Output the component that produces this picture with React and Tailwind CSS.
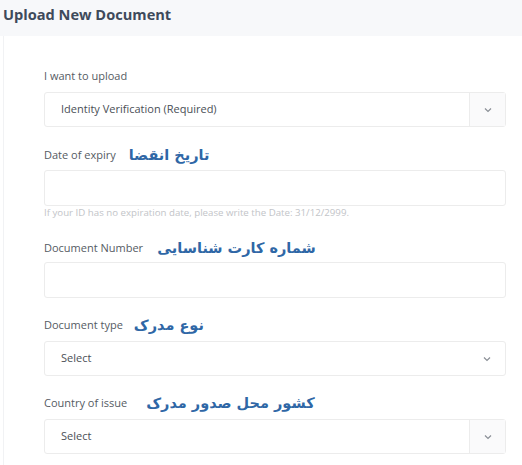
function Chevron() {
  return (
    <svg width="10" height="10" viewBox="0 0 10 10" fill="none">
      <path d="M2 3.5 L5 6.5 L8 3.5" stroke="#8a8f96" strokeWidth="1.2" />
    </svg>
  );
}

function Label({ text, fa, gap = "gap-[13px]" }) {
  return (
    <div className={`flex items-center h-[20px] ${gap}`}>
      <span className="text-[11px] text-[#555b63]">{text}</span>
      {fa && (
        <span
          dir="rtl"
          className="text-[14.5px] font-bold text-[#2f67a6] leading-none"
          style={{ fontFamily: '"DejaVu Sans", sans-serif' }}
        >
          {fa}
        </span>
      )}
    </div>
  );
}

function SelectBox({ value, segment }) {
  return (
    <div className="flex h-[35px] border border-[#ececec] rounded-[3px] bg-white">
      <div className="flex-1 flex items-center pl-[16px] text-[11px] text-[#4a4f56]">
        {value}
      </div>
      <div
        className={
          segment
            ? "w-[36px] flex items-center justify-center bg-[#fafafb] border-l border-[#ececec]"
            : "w-[36px] flex items-center justify-center"
        }
      >
        <Chevron />
      </div>
    </div>
  );
}

function Input() {
  return <div className="h-[36px] border border-[#ececec] rounded-[3px] bg-white" />;
}

export default function App() {
  return (
    <div
      className="w-[522px] h-[465px] bg-white overflow-hidden"
      style={{ fontFamily: '"Open Sans", sans-serif' }}
    >
      <div className="h-[36px] bg-[#f7f8fa] flex items-center pl-[3px] pb-[6px]">
        <h1 className="text-[14.6px] font-bold text-[#3e4a5b]">Upload New Document</h1>
      </div>
      <div className="ml-[3px] border-l border-[#f1f2f4] h-full pl-[40px] pr-[16px] pt-[30px]">
        <Label text="I want to upload" />
        <div className="mt-[6px]">
          <SelectBox value="Identity Verification (Required)" segment />
        </div>

        <div className="mt-[18px]">
          <Label text="Date of expiry" fa="تاریخ انقضا" />
        </div>
        <div className="mt-[5px]">
          <Input />
        </div>
        <p className="mt-[1px] text-[9.7px] leading-[12px] text-[#c2c4c8]">
          If your ID has no expiration date, please write the Date: 31/12/2999.
        </p>

        <div className="mt-[19px]">
          <Label text="Document Number" fa="شماره کارت شناسایی" gap="gap-[14px]" />
        </div>
        <div className="mt-[4px]">
          <Input />
        </div>

        <div className="mt-[17px]">
          <Label text="Document type" fa="نوع مدرک" gap="gap-[11px]" />
        </div>
        <div className="mt-[6px]">
          <SelectBox value="Select" />
        </div>

        <div className="mt-[17px]">
          <Label text="Country of issue" fa="کشور محل صدور مدرک" gap="gap-[19px]" />
        </div>
        <div className="mt-[6px]">
          <SelectBox value="Select" segment />
        </div>
      </div>
    </div>
  );
}
